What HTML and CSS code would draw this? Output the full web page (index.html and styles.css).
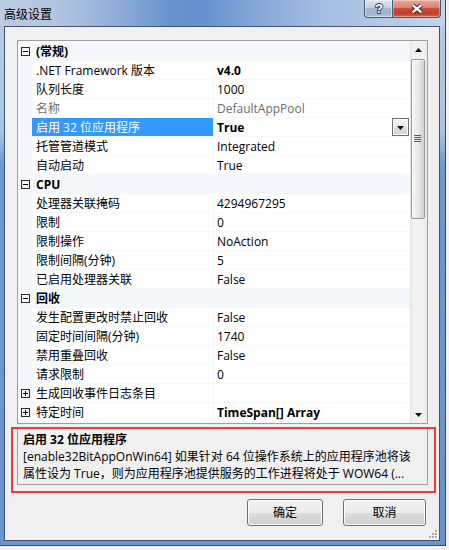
FILE: index.html
```html
<!DOCTYPE html>
<html lang="zh-CN">
<head>
<meta charset="utf-8">
<title>高级设置</title>
<link rel="stylesheet" href="styles.css">
</head>
<body>
<div class="window">
  <div class="titlebar">
    <span class="title">高级设置</span>
    <div class="caption">
      <div class="cbtn help">
        <svg width="28" height="18" viewBox="0 0 28 18"><text x="14.5" y="13.5" text-anchor="middle" class="qmark">?</text></svg>
      </div>
      <div class="cbtn close">
        <svg width="49" height="18" viewBox="0 0 49 18"><path d="M20.5 5 L29.5 12.5 M29.5 5 L20.5 12.5" class="x-out"/><path d="M20.5 5 L29.5 12.5 M29.5 5 L20.5 12.5" class="x-in"/></svg>
      </div>
    </div>
  </div>

  <div class="client">
    <div class="grid">
      <div class="rows">
        <div class="row cat">
          <span class="margin"><svg class="box" width="9" height="9" viewBox="0 0 9 9"><rect x="0.5" y="0.5" width="8" height="8"/><path d="M2 4.5h5"/></svg></span>
          <span class="cat-name">(常规)</span>
        </div>
        <div class="row"><span class="margin"></span><span class="label">.NET Framework 版本</span><span class="value bold">v4.0</span></div>
        <div class="row"><span class="margin"></span><span class="label">队列长度</span><span class="value">1000</span></div>
        <div class="row readonly"><span class="margin"></span><span class="label">名称</span><span class="value">DefaultAppPool</span></div>
        <div class="row selected"><span class="margin"></span><span class="label">启用 32 位应用程序</span><span class="value bold">True<span class="dropbtn"><svg width="7" height="4" viewBox="0 0 7 4"><path d="M0 0h7L3.5 4z"/></svg></span></span></div>
        <div class="row"><span class="margin"></span><span class="label">托管管道模式</span><span class="value">Integrated</span></div>
        <div class="row"><span class="margin"></span><span class="label">自动启动</span><span class="value">True</span></div>
        <div class="row cat">
          <span class="margin"><svg class="box" width="9" height="9" viewBox="0 0 9 9"><rect x="0.5" y="0.5" width="8" height="8"/><path d="M2 4.5h5"/></svg></span>
          <span class="cat-name">CPU</span>
        </div>
        <div class="row"><span class="margin"></span><span class="label">处理器关联掩码</span><span class="value">4294967295</span></div>
        <div class="row"><span class="margin"></span><span class="label">限制</span><span class="value">0</span></div>
        <div class="row"><span class="margin"></span><span class="label">限制操作</span><span class="value">NoAction</span></div>
        <div class="row"><span class="margin"></span><span class="label">限制间隔(分钟)</span><span class="value">5</span></div>
        <div class="row"><span class="margin"></span><span class="label">已启用处理器关联</span><span class="value">False</span></div>
        <div class="row cat">
          <span class="margin"><svg class="box" width="9" height="9" viewBox="0 0 9 9"><rect x="0.5" y="0.5" width="8" height="8"/><path d="M2 4.5h5"/></svg></span>
          <span class="cat-name">回收</span>
        </div>
        <div class="row"><span class="margin"></span><span class="label">发生配置更改时禁止回收</span><span class="value">False</span></div>
        <div class="row"><span class="margin"></span><span class="label">固定时间间隔(分钟)</span><span class="value">1740</span></div>
        <div class="row"><span class="margin"></span><span class="label">禁用重叠回收</span><span class="value">False</span></div>
        <div class="row"><span class="margin"></span><span class="label">请求限制</span><span class="value">0</span></div>
        <div class="row">
          <span class="margin"><svg class="box" width="9" height="9" viewBox="0 0 9 9"><rect x="0.5" y="0.5" width="8" height="8"/><path d="M2 4.5h5M4.5 2v5"/></svg></span>
          <span class="label">生成回收事件日志条目</span><span class="value"></span>
        </div>
        <div class="row">
          <span class="margin"><svg class="box" width="9" height="9" viewBox="0 0 9 9"><rect x="0.5" y="0.5" width="8" height="8"/><path d="M2 4.5h5M4.5 2v5"/></svg></span>
          <span class="label">特定时间</span><span class="value bold">TimeSpan[] Array</span>
        </div>
      </div>
      <div class="scrollbar">
        <div class="sb-arrow"><svg width="7" height="4" viewBox="0 0 7 4"><path d="M3.5 0L7 4H0z"/></svg></div>
        <div class="sb-thumb">
          <svg width="8" height="8" viewBox="0 0 8 8" class="grip-lines"><path d="M0 0.5h7M0 2.5h7M0 4.5h7M0 6.5h7"/></svg>
        </div>
        <div class="sb-track"></div>
        <div class="sb-arrow"><svg width="7" height="4" viewBox="0 0 7 4"><path d="M0 0h7L3.5 4z"/></svg></div>
      </div>
    </div>

    <div class="desc">
      <div class="desc-title">启用 32 位应用程序</div>
      <div class="desc-line">[enable32BitAppOnWin64] 如果针对 64 位操作系统上的应用程序池将该</div>
      <div class="desc-line">属性设为 True，则为应用程序池提供服务的工作进程将处于 WOW64 (...</div>
    </div>

    <div class="buttons">
      <button class="btn ok">确定</button>
      <button class="btn cancel">取消</button>
    </div>

    <svg class="sizegrip" width="9" height="9" viewBox="0 0 9 9">
      <g fill="#fff"><rect x="7" y="1" width="2" height="2"/><rect x="4" y="4" width="2" height="2"/><rect x="7" y="4" width="2" height="2"/><rect x="1" y="7" width="2" height="2"/><rect x="4" y="7" width="2" height="2"/><rect x="7" y="7" width="2" height="2"/></g>
      <g fill="#a9a9a9"><rect x="6" y="0" width="2" height="2"/><rect x="3" y="3" width="2" height="2"/><rect x="6" y="3" width="2" height="2"/><rect x="0" y="6" width="2" height="2"/><rect x="3" y="6" width="2" height="2"/><rect x="6" y="6" width="2" height="2"/></g>
    </svg>
  </div>

  <div class="annotation"></div>
</div>
</body>
</html>
```

FILE: styles.css
```css
* {
  box-sizing: border-box;
}

html,
body {
  margin: 0;
  padding: 0;
}

body {
  width: 449px;
  height: 550px;
  overflow: hidden;
  background: #f3f3f3;
  font-family: "Open Sans", "Noto Sans CJK SC", sans-serif;
  font-size: 12px;
  color: #000;
}

.window {
  position: relative;
  width: 446px;
  height: 546px;
  display: flex;
  flex-direction: column;
  background: linear-gradient(180deg, #b9cbe3 0%, #aec3e0 24%, #8fb0dc 27%, #6f97cf 30%, #6b93cd 100%);
  border-right: 1px solid #3a4a64;
  border-bottom: 1px solid #3a4a64;
}

/* title bar */
.titlebar {
  height: 26px;
  flex: none;
  display: flex;
  justify-content: space-between;
  align-items: flex-start;
  padding-right: 4px;
  background: linear-gradient(90deg, #bccce2 0%, #b3c6e0 12%, #93b0da 25%, #6a93cd 38%, #6791cc 46%, #86a8d8 58%, #a3bde1 72%, #b2c9e6 86%, #c3d4ea 100%);
}

.title {
  padding: 6px 0 0 4px;
  line-height: 16px;
  font-family: "Noto Sans CJK SC", sans-serif;
  font-size: 12px;
  color: #000;
}

.caption {
  display: flex;
  height: 18px;
}

.cbtn {
  height: 18px;
  border: 1px solid #4a5a76;
  border-top: none;
  display: flex;
}

.help {
  width: 28px;
  border-right: none;
  border-radius: 0 0 0 4px;
  background: linear-gradient(180deg, #dbe3ee 0%, #c4d0e1 45%, #a4b6d0 50%, #9fb2cf 80%, #b5c6de 100%);
  box-shadow: inset 0 0 0 1px rgba(255, 255, 255, 0.45);
}

.close {
  width: 49px;
  border-radius: 0 0 4px 0;
  background: linear-gradient(180deg, #e8a89c 0%, #d98171 45%, #c8503c 50%, #c03c28 78%, #d8674f 100%);
  box-shadow: inset 0 0 0 1px rgba(255, 255, 255, 0.35);
}

.qmark {
  font-family: "Liberation Sans", sans-serif;
  font-weight: bold;
  font-size: 13px;
  fill: #fff;
  stroke: #3c4656;
  stroke-width: 2px;
  paint-order: stroke;
}

.x-out {
  stroke: #3d2a28;
  stroke-width: 4.6;
  fill: none;
}

.x-in {
  stroke: #fff;
  stroke-width: 2.4;
  fill: none;
}

/* client area */
.client {
  position: relative;
  margin-left: 4px;
  width: 436px;
  height: 515px;
  flex: none;
  background: #f0f0f0;
  border: 1px solid #44536d;
  display: flex;
  flex-direction: column;
}

/* property grid */
.grid {
  margin: 13px 0 0 12px;
  width: 411px;
  height: 384px;
  flex: none;
  border: 1px solid #a0a0a0;
  background: #f4f7fc;
  display: flex;
  overflow: hidden;
}

.rows {
  width: 392px;
  flex: none;
  display: flex;
  flex-direction: column;
}

.row {
  height: 19px;
  flex: none;
  display: flex;
  border-top: 1px solid #f4f7fc;
  line-height: 18px;
  white-space: nowrap;
}

.margin {
  width: 14px;
  flex: none;
  display: flex;
  align-items: center;
  justify-content: center;
  background: #f4f7fc;
}

.box {
  display: block;
  margin-left: 1px;
}

.box rect {
  fill: none;
  stroke: #2b2b2b;
}

.box path {
  stroke: #000;
  fill: none;
}

.cat-name {
  padding: 1px 0 0 4px;
  line-height: 17px;
  font-weight: bold;
}

.label {
  width: 181px;
  flex: none;
  padding: 1px 0 0 4px;
  line-height: 17px;
  background: #fff;
  overflow: hidden;
}

.value {
  width: 196px;
  flex: none;
  margin-left: 1px;
  padding: 1px 0 0 3px;
  line-height: 17px;
  background: #fff;
  display: flex;
  justify-content: space-between;
  align-items: center;
  overflow: hidden;
}

.bold {
  font-weight: bold;
}

.readonly .label,
.readonly .value {
  color: #6d6d6d;
}

.selected .label {
  background: #3399ff;
  color: #fff;
}

.selected .value {
  padding-top: 0;
}

.dropbtn {
  width: 17px;
  height: 18px;
  margin-right: 1px;
  border: 1px solid #707070;
  background: linear-gradient(180deg, #f2f2f2 0%, #ebebeb 50%, #dddddd 51%, #d4d4d4 100%);
  box-shadow: inset 0 0 0 1px #fafafa;
  display: flex;
  align-items: center;
  justify-content: center;
  padding-top: 1px;
}

.dropbtn svg,
.sb-arrow svg {
  display: block;
  fill: #111;
}

/* scrollbar */
.scrollbar {
  width: 17px;
  flex: none;
  display: flex;
  flex-direction: column;
  background: linear-gradient(90deg, #e4e4e4 0%, #f1f1f1 15%, #f1f1f1 80%, #e9e9e9 100%);
}

.sb-arrow {
  height: 17px;
  flex: none;
  display: flex;
  align-items: center;
  justify-content: center;
}

.sb-thumb {
  height: 160px;
  flex: none;
  margin: 1px 2px 0 1px;
  border: 1px solid #979797;
  border-radius: 2px;
  background: linear-gradient(90deg, #f6f6f6 0%, #ececec 45%, #dcdcdc 75%, #cfcfcf 100%);
  box-shadow: inset 1px 1px 0 #fdfdfd;
  display: flex;
  align-items: center;
  justify-content: center;
}

.grip-lines path {
  stroke: #5d5d5d;
  fill: none;
}

.sb-track {
  flex: 1;
}

/* description panel */
.desc {
  margin: 4px 0 0 12px;
  width: 411px;
  height: 57px;
  flex: none;
  border: 1px solid #a0a0a0;
  padding: 2px 5px 0;
  line-height: 17px;
  white-space: nowrap;
  overflow: hidden;
}

.desc-title {
  font-weight: bold;
}

/* dialog buttons */
.buttons {
  display: flex;
  justify-content: flex-end;
  gap: 20px;
  margin-top: 14px;
  padding-right: 13px;
}

.btn {
  height: 27px;
  padding: 0;
  border: 1px solid #707070;
  border-radius: 3px;
  background: linear-gradient(180deg, #f2f2f2 0%, #ebebeb 50%, #dddddd 51%, #cfcfcf 100%);
  box-shadow: inset 0 0 0 1px #fcfcfc;
  font-family: "Open Sans", "Noto Sans CJK SC", sans-serif;
  font-size: 12px;
  color: #000;
  line-height: 25px;
  text-align: center;
}

.ok {
  width: 76px;
}

.cancel {
  width: 83px;
}

.sizegrip {
  position: absolute;
  right: 1px;
  bottom: 1px;
}

/* red annotation rectangle drawn over the screenshot */
.annotation {
  position: absolute;
  left: 11px;
  top: 427px;
  width: 425px;
  height: 66px;
  border: 2px solid #f03a3a;
  pointer-events: none;
}
```
